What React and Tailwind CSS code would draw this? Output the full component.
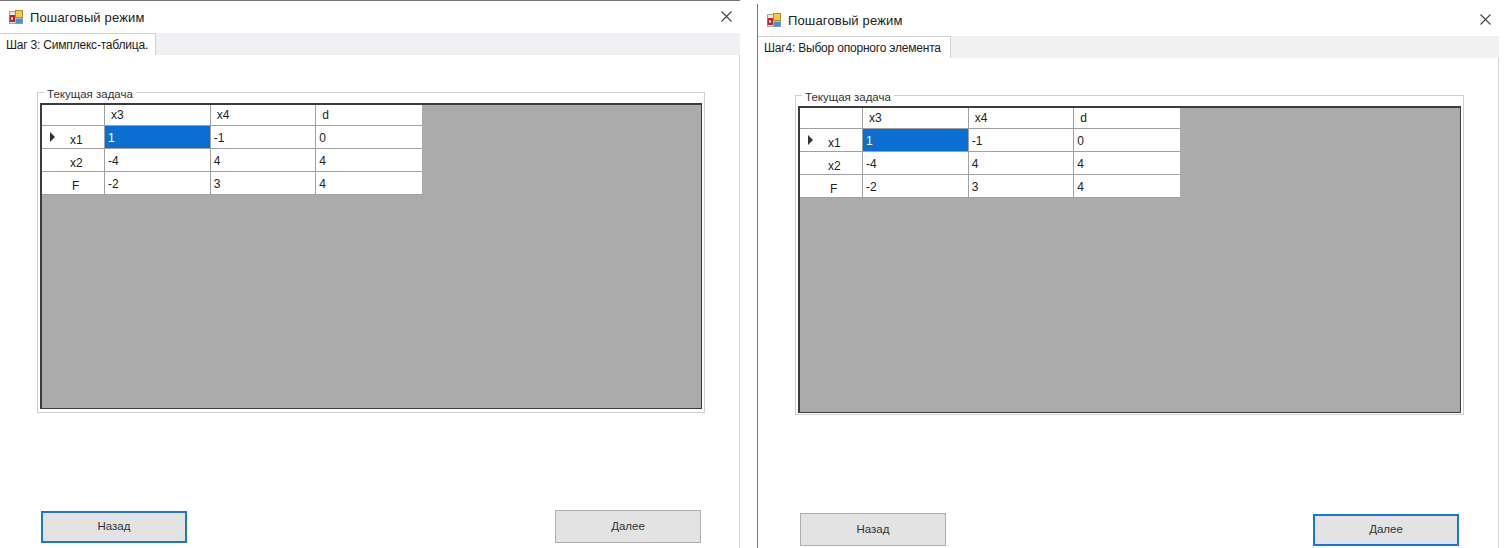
const rows = [
  { name: 'x1', cells: ['1', '-1', '0'], current: true },
  { name: 'x2', cells: ['-4', '4', '4'] },
  { name: 'F', cells: ['-2', '3', '4'] },
];

function AppIcon() {
  return (
    <svg width="14" height="14" viewBox="0 0 14 14" className="shrink-0">
      <rect x="0.5" y="1.5" width="13" height="12" fill="#e6e6e6" stroke="#a6a6a6" />
      <rect x="0.5" y="5" width="5.5" height="7" fill="#c0272d" />
      <rect x="2" y="7.5" width="2" height="2" fill="#f4f4f4" />
      <rect x="6.5" y="0.5" width="7" height="7" fill="#f7c93e" stroke="#b58d22" />
      <rect x="6.5" y="8.5" width="7" height="5" fill="#4a90d9" />
    </svg>
  );
}

function CloseIcon() {
  return (
    <svg width="11" height="11" viewBox="0 0 11 11" className="shrink-0">
      <path d="M0.5 0.5 L10.5 10.5 M10.5 0.5 L0.5 10.5" stroke="#444" strokeWidth="1.1" fill="none" />
    </svg>
  );
}

function DataGrid({ heightClass }) {
  return (
    <div className={`${heightClass} bg-[#ababab] border-2 border-[#3c3c3c] border-r border-b`}>
      <div className="w-[380px] bg-white text-[12px] text-[#222]">
        <div className="flex h-[21px] border-b border-[#a0a0a0]">
          <div className="w-[63px] border-r border-[#a0a0a0]" />
          <div className="w-[105.67px] pl-[6px] pt-[3px] leading-[14px] border-r border-[#a0a0a0]">x3</div>
          <div className="w-[105.67px] pl-[6px] pt-[3px] leading-[14px] border-r border-[#a0a0a0]">x4</div>
          <div className="w-[105.66px] pl-[6px] pt-[3px] leading-[14px]">d</div>
        </div>
        {rows.map((row) => (
          <div key={row.name} className="flex h-[23px] border-b border-[#a0a0a0]">
            <div className="relative w-[63px] border-r border-[#a0a0a0] pl-[28px] pt-[7px] leading-[14px]">
              {row.current && (
                <span className="absolute left-[8px] top-[6px] border-y-[5px] border-l-[5px] border-y-transparent border-l-[#333]" />
              )}
              {row.name === 'F' ? <span className="pl-[2px]">F</span> : row.name}
            </div>
            {row.cells.map((cell, i) => (
              <div
                key={i}
                className={`w-[105.67px] pl-[3px] pt-[4px] leading-[16px] ${i < 2 ? 'border-r border-[#a0a0a0]' : ''} ${row.current && i === 0 ? 'bg-[#0a6fd1] text-white' : ''}`}
              >
                {cell}
              </div>
            ))}
          </div>
        ))}
      </div>
    </div>
  );
}

function Button({ label, focused }) {
  return (
    <div
      className={`w-[146px] flex items-center justify-center bg-[#e3e3e3] text-[11.5px] text-[#333] ${focused ? 'h-[32px] mt-[1px] border-2 border-[#1b76dc]' : 'h-[33px] border border-[#adadad]'}`}
    >
      {label}
    </div>
  );
}

function StepWindow({ tab, tabWidth, backFocused, className, groupClass, gridHeight, buttonsClass }) {
  return (
    <div className={`flex flex-col ${className}`}>
      <div className="h-[32px] shrink-0 flex items-center pl-[9px] pr-[8px]">
        <AppIcon />
        <span className="ml-[7px] mt-[2px] text-[13px] text-[#222] tracking-[0.15px]">Пошаговый режим</span>
        <span className="ml-auto mb-[2px]"><CloseIcon /></span>
      </div>
      <div className="h-[22px] shrink-0 flex bg-[#f1f0f2]">
        <div
          className="bg-white border-t border-r border-[#d0d0d0] pl-[6px] pt-[2px] text-[12px] leading-[18px] text-[#222] tracking-[-0.2px] whitespace-nowrap"
          style={{ width: tabWidth }}
        >
          {tab}
        </div>
      </div>
      <div className="flex-1 flex flex-col border-r border-[#d4d0d6] pl-[37px] pr-[34px] pt-[37px]">
        <div className={`relative border border-[#cfcfcf] pl-[2px] pr-[2px] pt-[10px] ${groupClass}`}>
          <span className="absolute left-[6px] top-[-5px] bg-white px-[3px] text-[11.5px] leading-[13px] text-[#333]">
            Текущая задача
          </span>
          <DataGrid heightClass={gridHeight} />
        </div>
        <div className={`mt-auto flex justify-between ${buttonsClass}`}>
          <Button label="Назад" focused={backFocused} />
          <Button label="Далее" focused={!backFocused} />
        </div>
      </div>
    </div>
  );
}

export default function App() {
  return (
    <div className="h-[548px] w-[1508px] overflow-hidden bg-white flex font-['Liberation_Sans',sans-serif]">
      <StepWindow
        className="w-[740px] border-t border-[#777]"
        tab="Шаг 3: Симплекс-таблица."
        tabWidth={156}
        backFocused
        groupClass="pb-[3px]"
        gridHeight="h-[306px]"
        buttonsClass="pl-[4px] pr-[4px] pb-[5px]"
      />
      <div className="ml-[17px] mt-[4px] flex-1 flex pr-[9px]">
        <StepWindow
          className="w-full border-l border-[#777]"
          tab="Шаг4: Выбор опорного элемента"
          tabWidth={193}
          groupClass="pb-[1px]"
          gridHeight="h-[307px]"
          buttonsClass="pl-[5px] pr-[5px] pb-[2px]"
        />
      </div>
    </div>
  );
}
